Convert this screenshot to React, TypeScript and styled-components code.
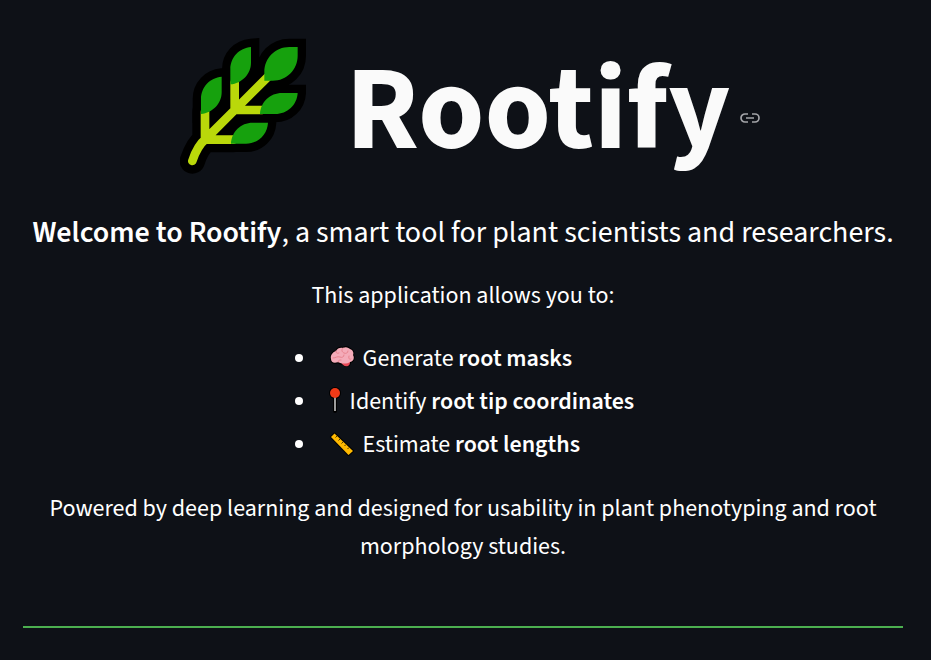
import React from "react";
import styled, { createGlobalStyle } from "styled-components";

const GlobalStyle = createGlobalStyle`
  body {
    margin: 0;
    background: #0e1117;
    color: #fafafa;
    font-family: "Source Sans Pro", "Source Sans 3", "Noto Sans CJK JP", sans-serif;
  }
`;

const Page = styled.main`
  padding: 38px 28px 32px 23px;
  text-align: center;
`;

const Header = styled.header`
  display: flex;
  justify-content: center;
  align-items: flex-start;
`;

const Sprig = styled.svg`
  flex: none;
  width: 126px;
  height: 136px;
  margin: 0 40px 0 14px;
`;

const Title = styled.h1`
  margin: 0;
  font-size: 120px;
  font-weight: 700;
  line-height: 146px;
`;

const AnchorLink = styled.a`
  display: flex;
  align-self: center;
  margin: 14px 0 0 10px;
  color: #a3a4a8;
`;

const Lead = styled.p`
  margin: 25px 0 0;
  font-size: 30px;
  line-height: 48px;
  color: #ffffff;
`;

const Text = styled.p`
  margin: 20px 0 0;
  font-size: 24px;
  line-height: 38px;
  color: #ffffff;
`;

const Strong = styled.strong`
  font-weight: 600;
`;

const Features = styled.ul`
  display: inline-grid;
  gap: 5px;
  margin: 25px 0 6px;
  padding: 0 0 0 26px;
  text-align: left;
  color: #ffffff;
`;

const Feature = styled.li`
  padding-left: 10px;
  font-size: 24px;
  line-height: 38px;
`;

const Emoji = styled.svg<{ $width: number }>`
  width: ${(p) => p.$width}px;
  height: 28px;
  vertical-align: -6px;
`;

const Divider = styled.hr`
  height: 2px;
  margin: 60px 0 0;
  border: 0;
  background: #4caf50;
`;

const stems =
  "M67 393C77 362 91 340 108 326L194 240L292 142M105 245V328M105 329H190M194 158V240M194 240H276";
const leaves =
  "M383 51H358C316 51 283 84 283 126V152H308C350 152 383 119 383 77ZM243 51C208 54 181 82 181 118V163C216 160 243 132 243 98ZM155 140C120 143 93 171 93 207V252C128 249 155 221 155 187ZM383 189H336C300 189 272 216 270 252H316C352 252 381 225 383 189ZM294 278H248C212 278 185 305 183 341H228C264 341 292 314 294 278Z";

function SprigIcon() {
  return (
    <Sprig viewBox="30 24 378 408" aria-hidden="true">
      <path d={stems} fill="none" stroke="#000" strokeWidth="76" strokeLinecap="round" strokeLinejoin="round" />
      <path d={leaves} fill="#000" stroke="#000" strokeWidth="50" />
      <path d={stems} fill="none" stroke="#bad80a" strokeWidth="26" strokeLinecap="round" />
      <path d={leaves} fill="#16a10d" />
    </Sprig>
  );
}

function Brain() {
  const shape =
    "M3 15C2 11 5 8 8 7C9 4 13 3 15 4C18 2 21 4 22 5C25 6 26 9 25 11C27 14 25 18 22 18C22 22 18 23 15 20C13 20 11 19 10 18C6 20 3 18 3 15Z";
  return (
    <Emoji $width={30} viewBox="0 0 30 28" aria-hidden="true">
      <path d={shape} fill="#000" stroke="#000" strokeWidth="2" />
      <path d="M13 18C14 21 17 23 20 22C22 21 22 19 22 17Z" fill="#e74856" />
      <path
        d="M3 15C2 11 5 8 8 7C9 4 13 3 15 4C18 2 21 4 22 5C25 6 26 9 25 11C27 14 25 18 22 18C19 20 14 20 10 18C6 20 3 18 3 15Z"
        fill="#f4abb9"
      />
      <path
        d="M8 7C8 9 9 10 11 9M15 4C13 6 14 8 16 9C18 10 20 9 20 7M5 14C8 14 9 12 12 13C14 14 16 13 16 11M21 12C20 15 22 16 23 15M10 18C10 16 12 16 13 16"
        fill="none"
        stroke="#e8838f"
        strokeWidth="1"
        strokeLinecap="round"
      />
    </Emoji>
  );
}

function Pin() {
  return (
    <Emoji $width={17} viewBox="0 0 17 28" aria-hidden="true">
      <path d="M7 8V24" stroke="#000" strokeWidth="4" strokeLinecap="round" />
      <circle cx="7" cy="6" r="6" fill="#000" />
      <path d="M7 9V24" stroke="#d0d0d0" strokeWidth="1.5" />
      <circle cx="7" cy="6" r="5" fill="#f03a17" />
    </Emoji>
  );
}

function Ruler() {
  return (
    <Emoji $width={30} viewBox="0 0 30 28" aria-hidden="true">
      <path d="M6.500 3.500L25 21L20.500 25L3 7Z" fill="#ffb900" stroke="#000" strokeWidth="2" paintOrder="stroke" strokeLinejoin="round" />
      <path d="M9 6L7.500 7.500M12 9L10.500 10.500M15 12L13.500 13.500M18 14.500L16.500 16M21 17.500L19.500 19" stroke="#4d3800" strokeWidth="1" />
    </Emoji>
  );
}

const features = [
  { icon: <Brain />, verb: "Generate", subject: "root masks" },
  { icon: <Pin />, verb: "Identify", subject: "root tip coordinates" },
  { icon: <Ruler />, verb: "Estimate", subject: "root lengths" },
];

export default function App() {
  return (
    <>
      <GlobalStyle />
      <Page>
        <Header>
          <SprigIcon />
          <Title id="rootify">Rootify</Title>
          <AnchorLink href="#rootify" aria-label="Link to heading">
            <svg width="20" height="10" viewBox="0 0 20 10" fill="none" stroke="currentColor" strokeWidth="1.7">
              <path d="M8 9H5A4 4 0 0 1 5 1h3M12 1h3a4 4 0 0 1 0 8h-3M6 5h8" />
            </svg>
          </AnchorLink>
        </Header>
        <Lead>
          <Strong>Welcome to Rootify</Strong>, a smart tool for plant scientists and researchers.
        </Lead>
        <Text>This application allows you to:</Text>
        <Features>
          {features.map((f) => (
            <Feature key={f.verb}>
              {f.icon} {f.verb} <Strong>{f.subject}</Strong>
            </Feature>
          ))}
        </Features>
        <Text>
          Powered by deep learning and designed for usability in plant phenotyping and root morphology studies.
        </Text>
        <Divider />
      </Page>
    </>
  );
}
